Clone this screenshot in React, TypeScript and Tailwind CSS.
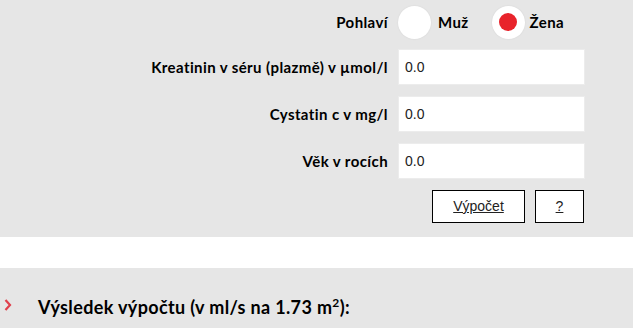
import React from "react";

function Row({ label, children }: { label: string; children: React.ReactNode }) {
  return (
    <div className="flex items-center">
      <div className="w-[388px] text-right text-[15px] tracking-[0.4px] font-bold text-black font-['Lato',sans-serif] whitespace-nowrap">{label}</div>
      <div className="ml-[10px] flex items-center">{children}</div>
    </div>
  );
}

function NumInput() {
  return (
    <input
      defaultValue="0.0"
      className="w-[187px] h-[36px] bg-white border border-[#ececec] pl-[6px] text-[14px] text-[#222] font-['Liberation_Sans',Arial,sans-serif] outline-none"
    />
  );
}

export default function App() {
  return (
    <div className="w-[633px] h-[328px] overflow-hidden bg-white font-['Lato',sans-serif]">
      <div className="bg-[#e6e6e6] h-[237px] pt-[5px]">
        <Row label="Pohlaví">
          <div className="flex items-center h-[34px]">
            <span className="w-[33px] h-[33px] rounded-full bg-white shadow-[0_0_2px_rgba(0,0,0,0.08)]" />
            <span className="ml-[7px] text-[15px] tracking-[0.4px] font-bold">Muž</span>
            <span className="ml-[23px] w-[33px] h-[33px] rounded-full bg-white shadow-[0_0_2px_rgba(0,0,0,0.08)] flex items-center justify-center">
              <span className="w-[18px] h-[18px] rounded-full bg-[#e8232b]" />
            </span>
            <span className="ml-[5px] text-[15px] tracking-[0.4px] font-bold">Žena</span>
          </div>
        </Row>
        <div className="mt-[10px]">
          <Row label="Kreatinin v séru (plazmě) v µmol/l">
            <NumInput />
          </Row>
        </div>
        <div className="mt-[11px]">
          <Row label="Cystatin c v mg/l">
            <NumInput />
          </Row>
        </div>
        <div className="mt-[11px]">
          <Row label="Věk v rocích">
            <NumInput />
          </Row>
        </div>
        <div className="mt-[11px] flex justify-end pr-[49px] gap-[10px]">
          <button className="w-[93px] h-[33px] bg-white border border-black text-[14px] text-[#222] underline font-['Liberation_Sans',Arial,sans-serif]">
            Výpočet
          </button>
          <button className="w-[49px] h-[33px] bg-white border border-black text-[14px] text-[#222] underline font-['Liberation_Sans',Arial,sans-serif]">
            ?
          </button>
        </div>
      </div>
      <div className="h-[31px] bg-white" />
      <div className="bg-[#e6e6e6] h-[60px] flex items-start pl-[4px]">
        <svg width="8" height="12" viewBox="0 0 8 12" className="mt-[31px]">
          <polyline points="1.5,1 6,6 1.5,11" fill="none" stroke="#e0404c" strokeWidth="2.2" />
        </svg>
        <span className="ml-[26px] mt-[27px] text-[18px] leading-[24px] tracking-[0.35px] font-bold text-black whitespace-nowrap">
          Výsledek výpočtu (v ml/s na 1.73 m<sup className="text-[12px] -top-[7px]">2</sup>):
        </span>
      </div>
    </div>
  );
}
